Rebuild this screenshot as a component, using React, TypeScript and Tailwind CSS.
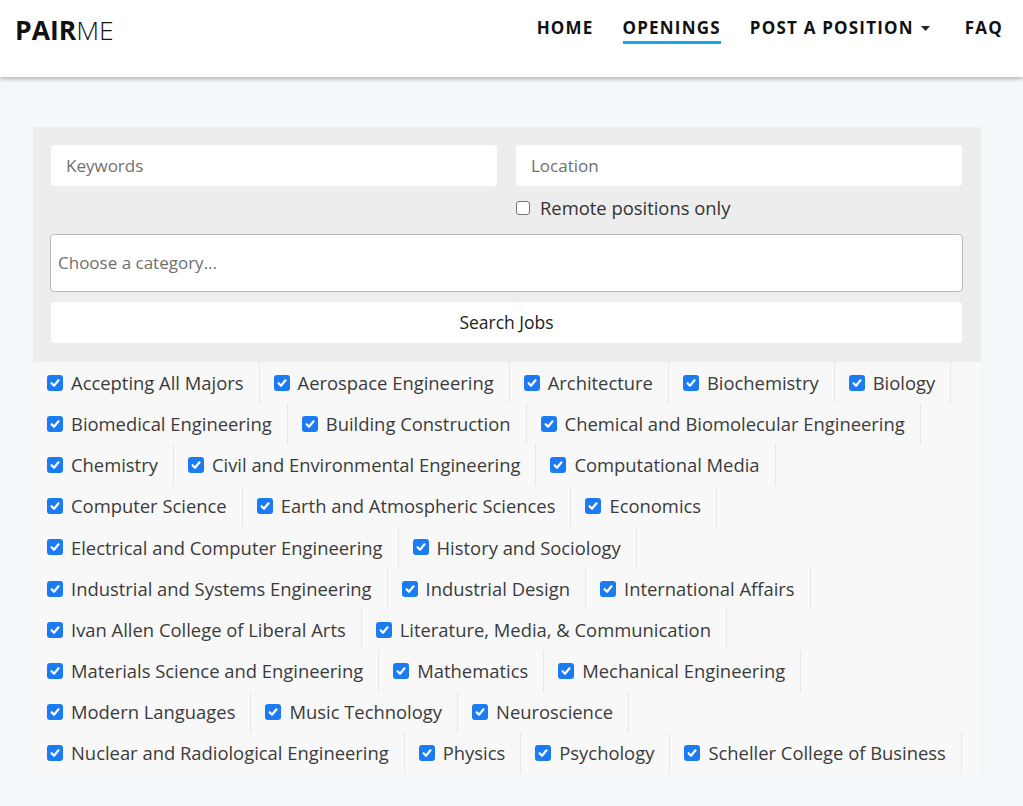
import React from "react";

const rows: string[][] = [
  ["Accepting All Majors", "Aerospace Engineering", "Architecture", "Biochemistry", "Biology"],
  ["Biomedical Engineering", "Building Construction", "Chemical and Biomolecular Engineering"],
  ["Chemistry", "Civil and Environmental Engineering", "Computational Media"],
  ["Computer Science", "Earth and Atmospheric Sciences", "Economics"],
  ["Electrical and Computer Engineering", "History and Sociology"],
  ["Industrial and Systems Engineering", "Industrial Design", "International Affairs"],
  ["Ivan Allen College of Liberal Arts", "Literature, Media, & Communication"],
  ["Materials Science and Engineering", "Mathematics", "Mechanical Engineering"],
  ["Modern Languages", "Music Technology", "Neuroscience"],
  ["Nuclear and Radiological Engineering", "Physics", "Psychology", "Scheller College of Business"],
];

function CheckedBox() {
  return (
    <span className="flex h-[16px] w-[16px] shrink-0 items-center justify-center rounded-[3px] bg-[#1b7bf2]">
      <svg width="12" height="12" viewBox="0 0 12 12" fill="none">
        <path d="M2.6 6.2 L5 8.7 L9.5 3.3" stroke="white" strokeWidth="2.2" strokeLinecap="round" strokeLinejoin="round" />
      </svg>
    </span>
  );
}

const font = "font-['Open_Sans','Liberation_Sans',sans-serif]";

export default function App() {
  return (
    <div className={`min-h-[806px] bg-[#f3f8fb] ${font}`}>
      <header className="flex h-[77px] items-start justify-between bg-white pl-[15px] pr-[20px] shadow-[0_2px_4px_rgba(0,0,0,0.28)]">
        <div className="mt-[12px] text-[26.5px] leading-[36px] text-[#111]">
          <span className="font-bold">PAIR</span>
          <span className="font-light">ME</span>
        </div>
        <nav className="mt-[15px] flex items-start text-[17px] font-bold tracking-[1.2px] text-[#111]">
          <span className="leading-[26px]">HOME</span>
          <span className="ml-[29px] flex flex-col">
            <span className="leading-[26px]">OPENINGS</span>
            <span className="h-[3px] w-full bg-[#16a8ec]" />
          </span>
          <span className="ml-[29px] flex items-center gap-[7px] leading-[26px]">
            POST A POSITION
            <svg width="9" height="5" viewBox="0 0 9 5"><path d="M0 0 H9 L4.5 5 Z" fill="#222" /></svg>
          </span>
          <span className="ml-[35px] leading-[26px]">FAQ</span>
        </nav>
      </header>

      <main className="ml-[33px] mt-[50px] w-[948px]">
        <section className="flex flex-col bg-[#ededed] pb-[19px] pl-[18px] pr-[19px] pt-[18px]">
          <div className="grid grid-cols-2 gap-x-[19px]">
            <div className="flex h-[41px] items-center rounded-[3px] bg-white pl-[15px] text-[17px] text-[#707070]">Keywords</div>
            <div className="flex flex-col">
              <div className="flex h-[41px] items-center rounded-[3px] bg-white pl-[15px] text-[17px] text-[#707070]">Location</div>
              <label className="mt-[10px] flex items-center gap-[10px] text-[18.4px] leading-[24px] text-[#333]">
                <span className="h-[14px] w-[14px] rounded-[3px] border border-[#767676] bg-white" />
                Remote positions only
              </label>
            </div>
          </div>
          <div className="-mx-[1px] mt-[14px] flex h-[58px] items-center rounded-[4px] border border-[#b9b9b9] bg-white pl-[7px] text-[17px] text-[#6f6f6f]">
            Choose a category...
          </div>
          <button className="mt-[10px] h-[41px] rounded-[3px] bg-white text-[17.5px] text-[#222]">Search Jobs</button>
        </section>

        <section className="bg-[#f8f8f8]">
          {rows.map((row, i) => (
            <div key={i} className="flex">
              {row.map((name) => (
                <label
                  key={name}
                  className="flex h-[41.2px] items-center gap-[8px] border-r border-[#e6e6e6] pl-[14px] pr-[15px] text-[18.4px] text-[#3b3b3b]"
                >
                  <CheckedBox />
                  <span className="whitespace-nowrap">{name}</span>
                </label>
              ))}
            </div>
          ))}
        </section>
      </main>
    </div>
  );
}
